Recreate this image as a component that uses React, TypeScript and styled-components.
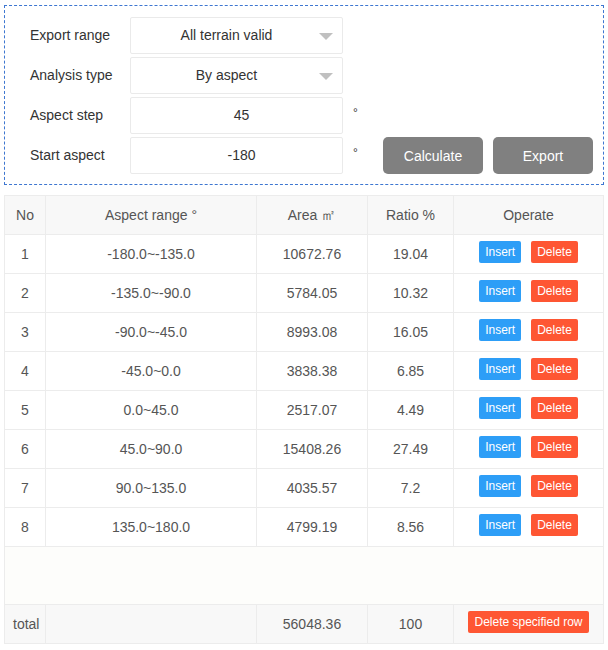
import React from "react";
import styled, { createGlobalStyle } from "styled-components";

const GlobalStyle = createGlobalStyle`
  html, body {
    margin: 0;
    padding: 0;
    background: #ffffff;
    font-family: "Liberation Sans", Arial, sans-serif;
  }
`;

const Page = styled.div`
  width: 608px;
  height: 650px;
  padding: 5px 4px 0 4px;
  box-sizing: border-box;
  display: flex;
  flex-direction: column;
  gap: 10px;
`;

const Form = styled.div`
  border: 1px dashed #3e77d1;
  height: 180px;
  box-sizing: border-box;
  padding: 9px 10px 0 25px;
  display: flex;
  align-items: flex-end;
`;

const Fields = styled.div`
  display: flex;
  flex-direction: column;
  gap: 3px;
  padding-bottom: 10px;
`;

const FieldRow = styled.div`
  display: grid;
  grid-template-columns: 100px 213px 28px;
  align-items: center;
  height: 37px;
`;

const Label = styled.div`
  font-size: 14px;
  color: #333;
  margin-top: -1px;
`;

const Box = styled.div<{ $select?: boolean }>`
  height: 37px;
  box-sizing: border-box;
  border: 1px solid #eaeaea;
  border-radius: 2px;
  display: flex;
  align-items: center;
  justify-content: center;
  position: relative;
  font-size: 14px;
  color: #333;
  padding: ${({ $select }) => ($select ? "0 20px 1px 0" : "0 0 1px 10px")};
`;

const Caret = styled.span`
  position: absolute;
  right: 9px;
  top: 15px;
  width: 0;
  height: 0;
  border-left: 7px solid transparent;
  border-right: 7px solid transparent;
  border-top: 7px solid #c0c0c0;
`;

const Unit = styled.span`
  font-size: 12px;
  color: #333;
  padding-left: 10px;
  margin-top: -5px;
`;

const Actions = styled.div`
  display: flex;
  gap: 10px;
  padding-bottom: 10px;
  margin-left: 12px;
`;

const GrayButton = styled.button`
  width: 100px;
  height: 37px;
  border: none;
  border-radius: 5px;
  background: #808080;
  color: #fff;
  font-family: inherit;
  font-size: 14px;
`;

const Table = styled.div`
  border: 1px solid #ececec;
  border-bottom: none;
  display: flex;
  flex-direction: column;
  font-size: 14px;
  color: #555;
`;

const Row = styled.div<{ $bg?: string }>`
  display: grid;
  grid-template-columns: 41px 211px 111px 86px 1fr;
  height: 39px;
  background: ${({ $bg }) => $bg ?? "#ffffff"};
  border-bottom: 1px solid #ececec;
  box-sizing: border-box;
`;

const Cell = styled.div<{ $left?: boolean; $last?: boolean }>`
  display: flex;
  align-items: center;
  justify-content: ${({ $left }) => ($left ? "flex-start" : "center")};
  padding-left: ${({ $left }) => ($left ? "8px" : "0")};
  border-right: ${({ $last }) => ($last ? "none" : "1px solid #ececec")};
  gap: 10px;
`;

const AreaUnit = styled.span`
  font-size: 15px;
  margin-left: 4px;
`;

const Filler = styled.div`
  height: 57px;
  background: #fdfdfb;
  border-bottom: 1px solid #ececec;
`;

const SmallButton = styled.button<{ $color: string }>`
  height: 22px;
  padding: 0 6px;
  margin-top: -5px;
  border: none;
  border-radius: 2px;
  background: ${({ $color }) => $color};
  color: #fff;
  font-family: inherit;
  font-size: 12px;
`;

const rows = [
  ["1", "-180.0~-135.0", "10672.76", "19.04"],
  ["2", "-135.0~-90.0", "5784.05", "10.32"],
  ["3", "-90.0~-45.0", "8993.08", "16.05"],
  ["4", "-45.0~0.0", "3838.38", "6.85"],
  ["5", "0.0~45.0", "2517.07", "4.49"],
  ["6", "45.0~90.0", "15408.26", "27.49"],
  ["7", "90.0~135.0", "4035.57", "7.2"],
  ["8", "135.0~180.0", "4799.19", "8.56"],
];

const BLUE = "#2d9ef7";
const RED = "#fe5633";

export default function App() {
  return (
    <>
      <GlobalStyle />
      <Page>
        <Form>
          <Fields>
            <FieldRow>
              <Label>Export range</Label>
              <Box $select>
                All terrain valid
                <Caret />
              </Box>
            </FieldRow>
            <FieldRow>
              <Label>Analysis type</Label>
              <Box $select>
                By aspect
                <Caret />
              </Box>
            </FieldRow>
            <FieldRow>
              <Label>Aspect step</Label>
              <Box>45</Box>
              <Unit>°</Unit>
            </FieldRow>
            <FieldRow>
              <Label>Start aspect</Label>
              <Box>-180</Box>
              <Unit>°</Unit>
            </FieldRow>
          </Fields>
          <Actions>
            <GrayButton>Calculate</GrayButton>
            <GrayButton>Export</GrayButton>
          </Actions>
        </Form>
        <Table>
          <Row $bg="#f8f8f8">
            <Cell>No</Cell>
            <Cell>Aspect range °</Cell>
            <Cell>
              <span>
                Area<AreaUnit>㎡</AreaUnit>
              </span>
            </Cell>
            <Cell>Ratio %</Cell>
            <Cell $last>Operate</Cell>
          </Row>
          {rows.map((r) => (
            <Row key={r[0]}>
              <Cell>{r[0]}</Cell>
              <Cell>{r[1]}</Cell>
              <Cell>{r[2]}</Cell>
              <Cell>{r[3]}</Cell>
              <Cell $last>
                <SmallButton $color={BLUE}>Insert</SmallButton>
                <SmallButton $color={RED}>Delete</SmallButton>
              </Cell>
            </Row>
          ))}
          <Filler />
          <Row $bg="#f8f8f8">
            <Cell $left>total</Cell>
            <Cell />
            <Cell>56048.36</Cell>
            <Cell>100</Cell>
            <Cell $last>
              <SmallButton $color={RED}>Delete specified row</SmallButton>
            </Cell>
          </Row>
        </Table>
      </Page>
    </>
  );
}
